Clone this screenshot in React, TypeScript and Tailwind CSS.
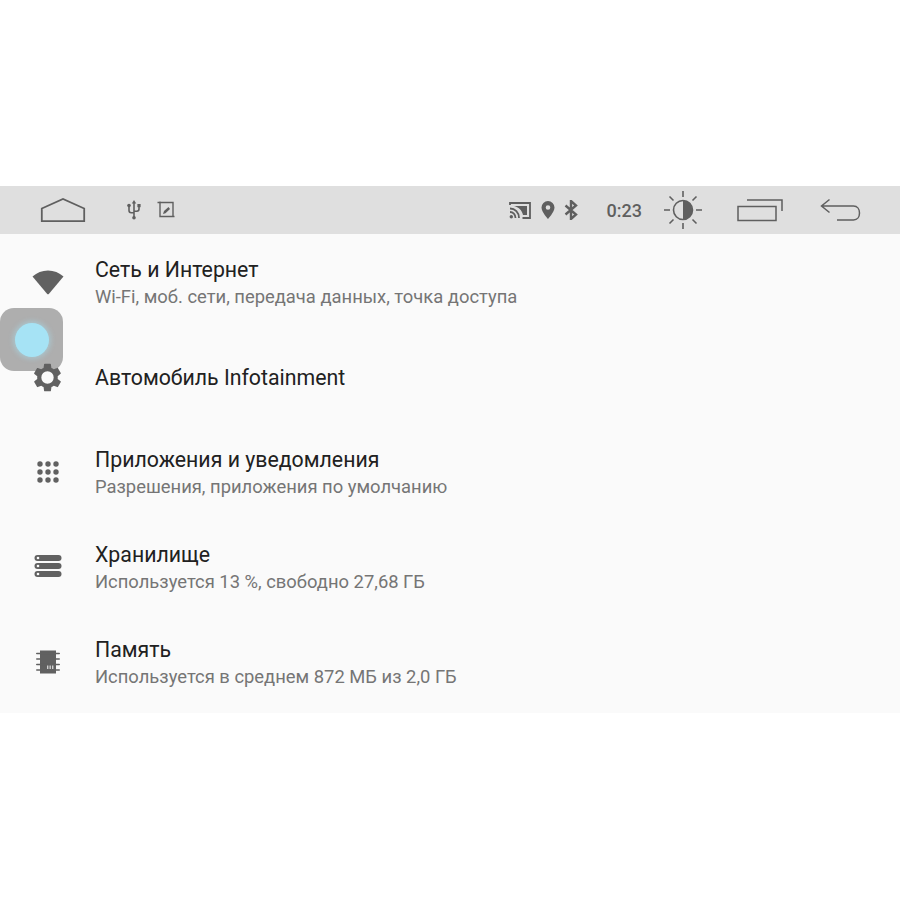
const rows = [
  { icon: <WifiIcon />, title: 'Сеть и Интернет', sub: 'Wi-Fi, моб. сети, передача данных, точка доступа' },
  { icon: <GearIcon />, title: 'Автомобиль Infotainment', sub: '' },
  { icon: <AppsIcon />, title: 'Приложения и уведомления', sub: 'Разрешения, приложения по умолчанию' },
  { icon: <StorageIcon />, title: 'Хранилище', sub: 'Используется 13 %, свободно 27,68 ГБ' },
  { icon: <MemoryIcon />, title: 'Память', sub: 'Используется в среднем 872 МБ из 2,0 ГБ' },
];

function WifiIcon() {
  return (
    <svg className="mb-[4px]" width="34" height="28" viewBox="0 0 34 28">
      <path d="M1.500 8.500C6 4.500 11 2.500 17 2.500s11 2 15.500 6L18 25.800q-1 1-2 0z" fill="#616161" />
    </svg>
  );
}

// sits above the floating button in the screenshot
function GearIcon() {
  return (
    <svg className="relative z-10 mb-[2px]" width="33" height="33" viewBox="0 0 24 24">
      <path
        fill="#616161"
        fillRule="evenodd"
        d="M19.400 13c.04-.330.06-.660.06-1s-.02-.670-.06-1l2.110-1.650c.190-.150.240-.420.120-.640l-2-3.460c-.120-.220-.390-.300-.610-.220l-2.490 1c-.520-.400-1.080-.730-1.690-.980l-.380-2.650C14.460 2.180 14.250 2 14 2h-4c-.250 0-.460.180-.490.420l-.380 2.650c-.610.250-1.170.590-1.690.980l-2.490-1c-.230-.090-.490 0-.610.220l-2 3.460c-.130.220-.070.490.120.640L4.570 11c-.040.330-.070.670-.070 1s.030.670.070 1l-2.110 1.650c-.190.150-.240.420-.120.640l2 3.460c.120.220.390.300.610.220l2.490-1c.520.400 1.080.730 1.690.980l.380 2.650c.030.240.240.420.490.420h4c.250 0 .460-.180.490-.420l.380-2.650c.610-.250 1.170-.590 1.690-.980l2.490 1c.230.090.490 0 .610-.220l2-3.460c.120-.220.070-.490-.120-.640L19.400 13zM12 16.500a4.500 4.500 0 1 1 0-9 4.500 4.500 0 0 1 0 9z"
      />
    </svg>
  );
}

function AppsIcon() {
  const dots = [3, 11, 19];
  return (
    <svg className="mb-[4px]" width="22" height="22" viewBox="0 0 22 22">
      {dots.map((y) => dots.map((x) => <circle key={`${x}-${y}`} cx={x} cy={y} r="2.700" fill="#616161" />))}
    </svg>
  );
}

function StorageIcon() {
  return (
    <svg className="mb-[5px]" width="28" height="22" viewBox="0 0 28 22">
      {[0, 8, 16].map((y) => (
        <g key={y}>
          <rect x="0.500" y={y} width="27" height="6" rx="3" fill="#616161" />
          <circle cx="4" cy={y + 3} r="1.300" fill="#fafafa" />
        </g>
      ))}
    </svg>
  );
}

function MemoryIcon() {
  return (
    <svg className="mb-[4px]" width="26" height="24" viewBox="0 0 26 24">
      <rect x="5" y="0.500" width="16" height="23" fill="#616161" />
      {[3.500, 9, 14.500, 20].map((y) => (
        <rect key={y} x="1" y={y - 0.800} width="24" height="1.600" rx="0.800" fill="#616161" />
      ))}
      <rect x="12" y="15.500" width="1.400" height="3.500" fill="#d0d0d0" />
      <rect x="14.500" y="15.500" width="1.400" height="3.500" fill="#d0d0d0" />
      <rect x="17" y="15.500" width="1.400" height="3.500" fill="#d0d0d0" />
    </svg>
  );
}

function HomeIcon() {
  return (
    <svg width="46" height="26" viewBox="0 0 46 26" fill="none" stroke="#5f5f5f" strokeWidth="1.800">
      <path d="M1.800 11.500 23 2l21.200 9.500v12.700H1.800z" />
    </svg>
  );
}

function UsbIcon() {
  return (
    <svg width="14" height="20" viewBox="0 0 14 20" fill="none" stroke="#5f5f5f" strokeWidth="1.600">
      <path d="M7 3v15M2 6v4.500c0 1.500 1 2.200 2.200 2.200H7M12 6v3c0 1.500-1 2.200-2.200 2.200H7" />
      <path d="M7 0 4.800 3.500h4.400z" fill="#5f5f5f" stroke="none" />
      <circle cx="7" cy="17.800" r="1.800" fill="#5f5f5f" stroke="none" />
      <circle cx="2" cy="5.500" r="1.800" fill="#5f5f5f" stroke="none" />
      <rect x="10.400" y="4" width="3.200" height="3.200" fill="#5f5f5f" stroke="none" />
    </svg>
  );
}

function CropEditIcon() {
  return (
    <svg width="18" height="18" viewBox="0 0 18 18" fill="none" stroke="#5f5f5f" strokeWidth="1.400">
      <path d="M.5 1.500h15.500V16M3 .5V15.500h14.500" />
      <path d="m6 13 1-3 4.500-4 1.500 2-4.500 4.200z" fill="#5f5f5f" stroke="none" />
    </svg>
  );
}

function CastIcon() {
  return (
    <svg width="22" height="18" viewBox="0 0 22 18" fill="none" stroke="#5f5f5f">
      <path d="M1 4V2h20v15h-7.500" strokeWidth="1.800" />
      <path d="M5 5h13v9h-4C13 9 9.500 6 5 5z" fill="#5f5f5f" stroke="none" />
      <path d="M1 7.500c5 0 9 4 9 9.500M1 11c3 0 5.500 2.500 5.500 6" strokeWidth="1.800" />
      <circle cx="2.300" cy="15.700" r="1.700" fill="#5f5f5f" stroke="none" />
    </svg>
  );
}

function PinIcon() {
  return (
    <svg width="14" height="18" viewBox="0 0 14 18">
      <path
        fill="#5f5f5f"
        fillRule="evenodd"
        d="M7 0a6.500 6.500 0 0 0-6.500 6.500C.5 11 7 18 7 18s6.500-7 6.500-11.500A6.500 6.500 0 0 0 7 0zm0 8.800a2.300 2.300 0 1 1 0-4.600 2.300 2.300 0 0 1 0 4.600z"
      />
    </svg>
  );
}

function BluetoothIcon() {
  return (
    <svg width="14" height="20" viewBox="0 0 14 20" fill="none" stroke="#5f5f5f" strokeWidth="2.400">
      <path d="M1.500 5.500 12 14.500 7 19V1l5 4.500L1.500 14.500" />
    </svg>
  );
}

function BrightnessIcon() {
  return (
    <svg width="40" height="40" viewBox="0 0 40 40" fill="none" stroke="#5f5f5f" strokeWidth="1.600">
      <circle cx="20" cy="20" r="9.500" />
      <path d="M20 10.500a9.500 9.500 0 0 1 0 19z" fill="#5f5f5f" stroke="none" />
      <path d="M20 1v6M20 33v6M1 20h6M33 20h6M6.500 6.500l4 4M29.500 29.500l4 4M33.500 6.500l-4 4M10.500 29.500l-4 4" />
    </svg>
  );
}

function RecentsIcon() {
  return (
    <svg width="46" height="24" viewBox="0 0 46 24" fill="none" stroke="#5f5f5f" strokeWidth="1.500">
      <path d="M1 8.500h38v14H1z" />
      <path d="M10 2h35v11" />
    </svg>
  );
}

function BackIcon() {
  return (
    <svg width="41" height="24" viewBox="0 0 41 24" fill="none" stroke="#5f5f5f" strokeWidth="1.500">
      <path d="M9.500 1.500 1.500 8l8 6.500M1.500 8h32c8 0 8 14 0 14H17" />
    </svg>
  );
}

function StatusBar() {
  return (
    <div className="flex h-12 items-center bg-[#dfdfdf] text-[#5f5f5f]">
      <div className="ml-10 flex w-[46px] justify-center">
        <HomeIcon />
      </div>
      <div className="ml-[41px] flex items-center gap-[16px]">
        <UsbIcon />
        <CropEditIcon />
      </div>
      <div className="ml-auto flex items-center">
        <CastIcon />
        <div className="ml-[10px]">
          <PinIcon />
        </div>
        <div className="ml-[9px]">
          <BluetoothIcon />
        </div>
        <span className="ml-[29px] text-[18px] font-medium">0:23</span>
        <div className="ml-[21px]">
          <BrightnessIcon />
        </div>
        <div className="ml-[34px]">
          <RecentsIcon />
        </div>
        <div className="ml-[37px] mr-[39px]">
          <BackIcon />
        </div>
      </div>
    </div>
  );
}

function AssistiveButton() {
  return (
    <div className="absolute left-0 top-[308px] flex h-[63px] w-[63px] items-center justify-center rounded-[14px] bg-[#aeaeae]">
      <div className="h-[34px] w-[34px] rounded-full bg-[#a6e3f5] shadow-[0_0_5px_2px_rgba(166,227,245,0.45)]" />
    </div>
  );
}

export default function App() {
  return (
    <div className="relative h-[900px] w-[900px] bg-white pt-[186px] font-['Roboto',sans-serif]">
      <StatusBar />
      <div className="bg-[#fafafa] py-[2px]">
        {rows.map((row) => (
          <div key={row.title} className="flex h-[95px] items-center">
            <div className="flex w-[95px] justify-center">{row.icon}</div>
            <div className="mb-[2px]">
              <div className="text-[21.300px] leading-[27px] text-[#212121]">{row.title}</div>
              {row.sub && <div className="text-[18.400px] leading-[27px] text-[#757575]">{row.sub}</div>}
            </div>
          </div>
        ))}
      </div>
      <AssistiveButton />
    </div>
  );
}
